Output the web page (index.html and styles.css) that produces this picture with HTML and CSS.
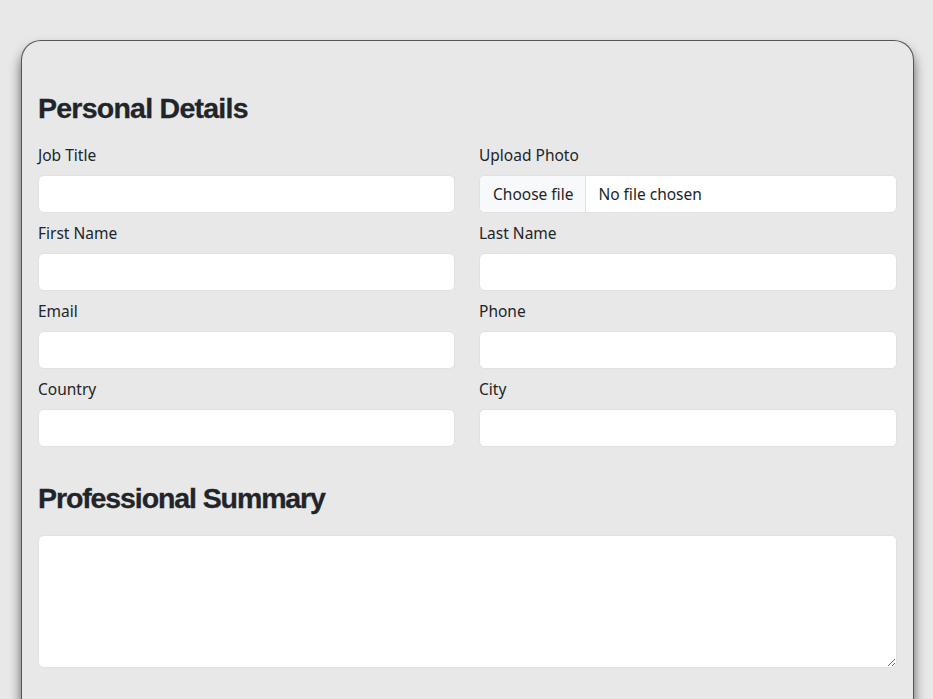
FILE: index.html
```html
<!DOCTYPE html>
<html lang="en">
<head>
<meta charset="utf-8">
<title>Resume Form</title>
<link rel="stylesheet" href="styles.css">
</head>
<body>
<div class="card">
  <h2 class="section-title">Personal Details</h2>
  <div class="grid">
    <div class="field">
      <label class="label">Job Title</label>
      <input class="control" type="text">
    </div>
    <div class="field">
      <label class="label">Upload Photo</label>
      <div class="file control">
        <span class="file-btn">Choose file</span>
        <span class="file-name">No file chosen</span>
      </div>
    </div>
    <div class="field">
      <label class="label">First Name</label>
      <input class="control" type="text">
    </div>
    <div class="field">
      <label class="label">Last Name</label>
      <input class="control" type="text">
    </div>
    <div class="field">
      <label class="label">Email</label>
      <input class="control" type="text">
    </div>
    <div class="field">
      <label class="label">Phone</label>
      <input class="control" type="text">
    </div>
    <div class="field">
      <label class="label">Country</label>
      <input class="control" type="text">
    </div>
    <div class="field">
      <label class="label">City</label>
      <input class="control" type="text">
    </div>
  </div>
  <h2 class="section-title second">Professional Summary</h2>
  <textarea class="control summary"></textarea>
</div>
</body>
</html>
```
FILE: styles.css
```css
html, body {
  margin: 0;
  padding: 0;
  background: #e8e8e8;
  font-family: "Noto Sans", "DejaVu Sans", sans-serif;
  color: #212529;
  overflow: hidden;
}
body {
  padding: 40px 20px 0 21px;
  height: 699px;
  box-sizing: border-box;
}
.card {
  width: 893px;
  box-sizing: border-box;
  border: 1px solid #555;
  border-radius: 20px;
  background: #e8e8e8;
  box-shadow: 0 8px 12px rgba(0, 0, 0, 0.6);
  padding: 16px 16px 0 16px;
  height: 680px;
  border-bottom: none;
  border-bottom-left-radius: 0;
  border-bottom-right-radius: 0;
}
.section-title {
  font-family: "Liberation Sans", Arial, sans-serif;
  font-weight: 700;
  font-size: 28.5px;
  line-height: 34px;
  letter-spacing: -0.75px;
  margin: 34px 0 17.5px 0;
  color: #212529;
  -webkit-text-stroke: 0.3px #212529;
}
.section-title.second {
  margin-top: 34px;
  margin-bottom: 20px;
  letter-spacing: -1.1px;
}
.grid {
  display: grid;
  grid-template-columns: 417px 418px;
  column-gap: 24px;
  row-gap: 8px;
}
.field {
  display: flex;
  flex-direction: column;
}
.label {
  font-size: 15.5px;
  line-height: 24px;
  margin-bottom: 8px;
}
.control {
  display: block;
  box-sizing: border-box;
  width: 100%;
  height: 38px;
  border: 1px solid #dee2e6;
  border-radius: 6px;
  background: #fff;
  margin: 0;
  font-family: inherit;
  font-size: 16px;
}
.file {
  display: flex;
  align-items: stretch;
  overflow: hidden;
  padding: 0;
}
.file-btn {
  display: flex;
  align-items: center;
  padding: 0 12px 0 13px;
  background: #f8f9fa;
  border-right: 1px solid #dee2e6;
  font-size: 15.5px;
}
.file-name {
  display: flex;
  align-items: center;
  padding-left: 12px;
  font-size: 15.5px;
}
.summary {
  height: 133px;
  resize: vertical;
}
```
